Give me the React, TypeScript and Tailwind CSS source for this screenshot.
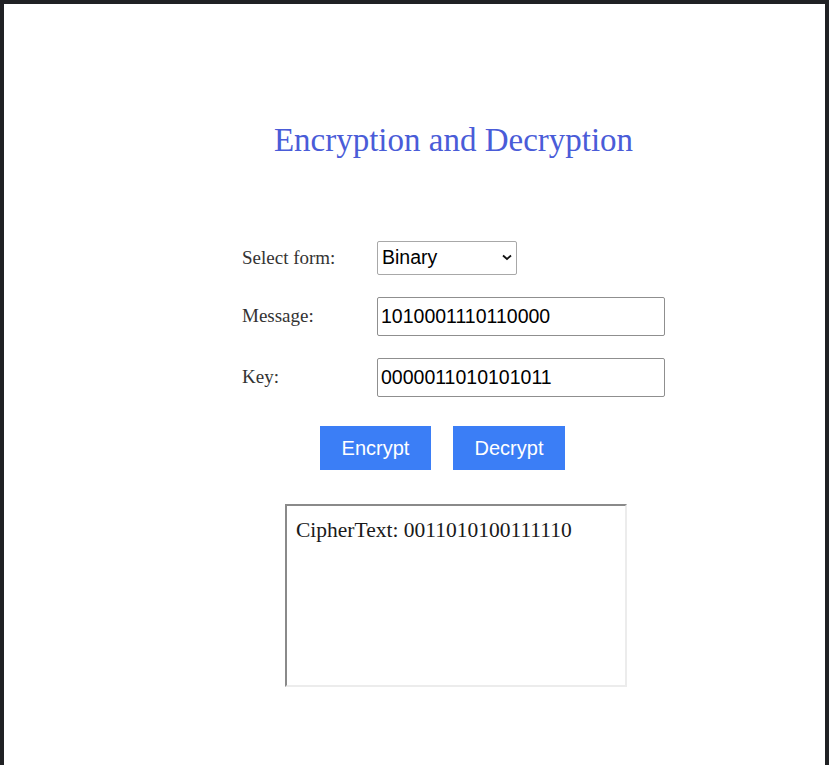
import { useState } from "react";

const serif = "font-['Liberation_Serif',serif]";
const sans = "font-['Liberation_Sans',Arial,sans-serif]";

const App = () => {
  const [form, setForm] = useState("Binary");
  const [message, setMessage] = useState("1010001110110000");
  const [key, setKey] = useState("0000011010101011");

  return (
    <div className="h-screen w-full bg-[#202124] pt-[4px] pl-[4px] pr-[4px]">
      <div className="h-full w-full bg-white flex flex-col items-center pl-[78px]">
        {/* Title */}
        <h1 className={`${serif} text-[33px] leading-none text-[#4a5cd8] mt-[120px]`}>
          Encryption and Decryption
        </h1>

        {/* Form */}
        <div className="mt-[84px] grid grid-cols-[135px_288px] gap-y-[22px] items-center">
          <label className={`${serif} text-[19px] text-[#333]`}>Select form:</label>
          <div className="relative w-[140px] h-[34px]">
            <select
              value={form}
              onChange={(e) => setForm(e.target.value)}
              className={`${sans} appearance-none w-full h-full border border-[#a8a8a8] rounded-[2px] bg-white pl-[4px] text-[19.5px] text-black outline-none`}
            >
              <option>Binary</option>
              <option>Decimal</option>
              <option>Hexadecimal</option>
            </select>
            <svg
              className="pointer-events-none absolute right-[5px] top-[13px]"
              width="10"
              height="7"
              viewBox="0 0 10 7"
            >
              <path d="M1 1.5 L5 5 L9 1.5" fill="none" stroke="#111" strokeWidth="1.8" />
            </svg>
          </div>

          <label className={`${serif} text-[19px] text-[#333]`}>Message:</label>
          <input
            value={message}
            onChange={(e) => setMessage(e.target.value)}
            className={`${sans} w-[288px] h-[39px] border border-[#8f8f8f] rounded-[2px] px-[3px] text-[19.5px] text-black outline-none`}
          />

          <label className={`${serif} text-[19px] text-[#333]`}>Key:</label>
          <input
            value={key}
            onChange={(e) => setKey(e.target.value)}
            className={`${sans} w-[288px] h-[39px] border border-[#8f8f8f] rounded-[2px] px-[3px] text-[19.5px] text-black outline-none`}
          />
        </div>

        {/* Buttons */}
        <div className="mt-[29px] flex gap-[22px] pr-[22px]">
          <button className={`${sans} w-[111px] h-[44px] bg-[#3b7ef6] text-white text-[20px]`}>
            Encrypt
          </button>
          <button className={`${sans} w-[112px] h-[44px] bg-[#3b7ef6] text-white text-[20px]`}>
            Decrypt
          </button>
        </div>

        {/* Output */}
        <div className="mt-[34px] ml-[5px] w-[342px] h-[183px] border-2 border-t-[#8a8a8a] border-l-[#8a8a8a] border-r-[#ececec] border-b-[#ececec] px-[9px] pt-[11px]">
          <p className={`${serif} text-[21.5px] leading-tight text-[#1a1a1a]`}>
            CipherText: 0011010100111110
          </p>
        </div>
      </div>
    </div>
  );
};

export default App;
